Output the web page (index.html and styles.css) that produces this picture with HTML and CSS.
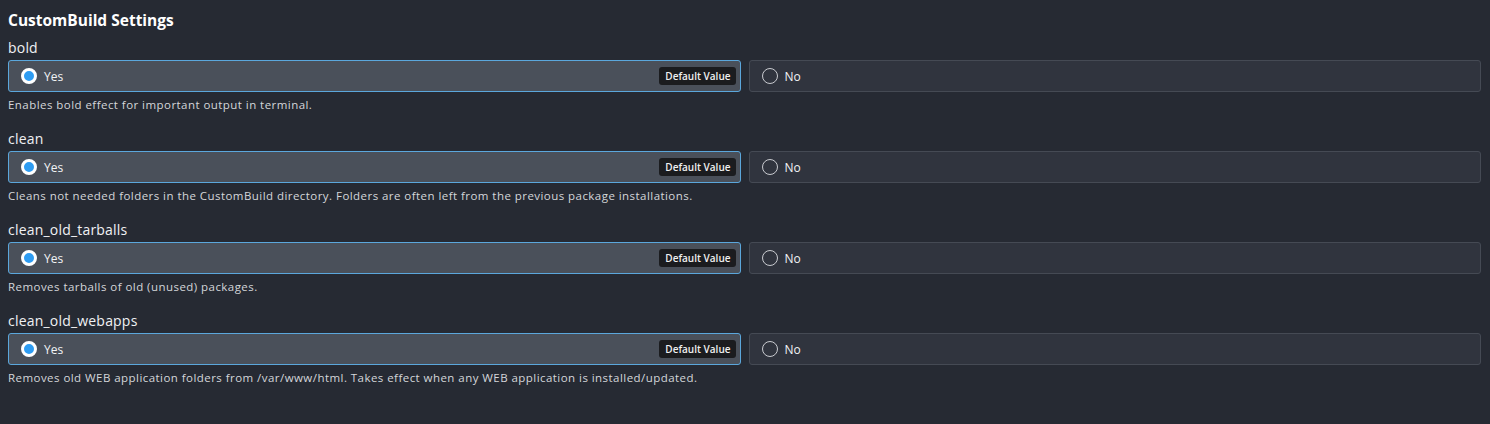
FILE: index.html
```html
<!DOCTYPE html>
<html>
<head>
<meta charset="utf-8">
<link rel="stylesheet" href="styles.css">
</head>
<body>
<div class="page">
  <h2 class="title">CustomBuild Settings</h2>

  <div class="setting">
    <div class="label">bold</div>
    <div class="options">
      <div class="option selected"><span class="radio on"></span><span class="opt-text">Yes</span><span class="badge">Default Value</span></div>
      <div class="option"><span class="radio"></span><span class="opt-text">No</span></div>
    </div>
    <div class="desc">Enables bold effect for important output in terminal.</div>
  </div>

  <div class="setting">
    <div class="label">clean</div>
    <div class="options">
      <div class="option selected"><span class="radio on"></span><span class="opt-text">Yes</span><span class="badge">Default Value</span></div>
      <div class="option"><span class="radio"></span><span class="opt-text">No</span></div>
    </div>
    <div class="desc">Cleans not needed folders in the CustomBuild directory. Folders are often left from the previous package installations.</div>
  </div>

  <div class="setting">
    <div class="label">clean_old_tarballs</div>
    <div class="options">
      <div class="option selected"><span class="radio on"></span><span class="opt-text">Yes</span><span class="badge">Default Value</span></div>
      <div class="option"><span class="radio"></span><span class="opt-text">No</span></div>
    </div>
    <div class="desc">Removes tarballs of old (unused) packages.</div>
  </div>

  <div class="setting">
    <div class="label">clean_old_webapps</div>
    <div class="options">
      <div class="option selected"><span class="radio on"></span><span class="opt-text">Yes</span><span class="badge">Default Value</span></div>
      <div class="option"><span class="radio"></span><span class="opt-text">No</span></div>
    </div>
    <div class="desc">Removes old WEB application folders from /var/www/html. Takes effect when any WEB application is installed/updated.</div>
  </div>
</div>
</body>
</html>
```

FILE: styles.css
```css
html, body {
  margin: 0;
  padding: 0;
  background: #262a33;
}
body {
  font-family: "Open Sans", "DejaVu Sans", sans-serif;
  color: #e8e9eb;
}
.page {
  padding: 9px 9px 0 8px;
}
.title {
  margin: 0;
  font-size: 15.5px;
  font-weight: 700;
  line-height: 22px;
  color: #ffffff;
}
.setting {
  display: flex;
  flex-direction: column;
}
.title + .setting {
  margin-top: 8px;
}
.setting + .setting {
  margin-top: 18px;
}
.label {
  font-size: 14px;
  line-height: 18px;
  letter-spacing: 0.2px;
  color: #f0f1f3;
  margin-bottom: 3px;
}
.options {
  display: flex;
  gap: 8px;
}
.option {
  flex: 1;
  height: 32px;
  box-sizing: border-box;
  display: flex;
  align-items: center;
  padding: 0 4px 0 12px;
  border: 1px solid #454a54;
  border-radius: 3px;
  background: #30343e;
}
.option.selected {
  border-color: #5ba7dc;
  background: #4a505a;
}
.radio {
  width: 16px;
  height: 16px;
  box-sizing: border-box;
  border-radius: 50%;
  border: 1.5px solid #c9cbd0;
  flex: none;
}
.radio.on {
  border: 3px solid #ffffff;
  background: #2e9cf2;
}
.opt-text {
  flex: 1;
  margin-left: 7px;
  font-size: 12px;
  color: #f2f3f5;
}
.badge {
  background: #1b1c1f;
  color: #f0f0f0;
  font-size: 10px;
  font-weight: 600;
  line-height: 18px;
  padding: 0 5px 0 6px;
  border-radius: 3px;
}
.desc {
  margin-top: 6px;
  font-size: 11.5px;
  line-height: 14px;
  letter-spacing: 0.45px;
  color: #d4d6da;
}
```
